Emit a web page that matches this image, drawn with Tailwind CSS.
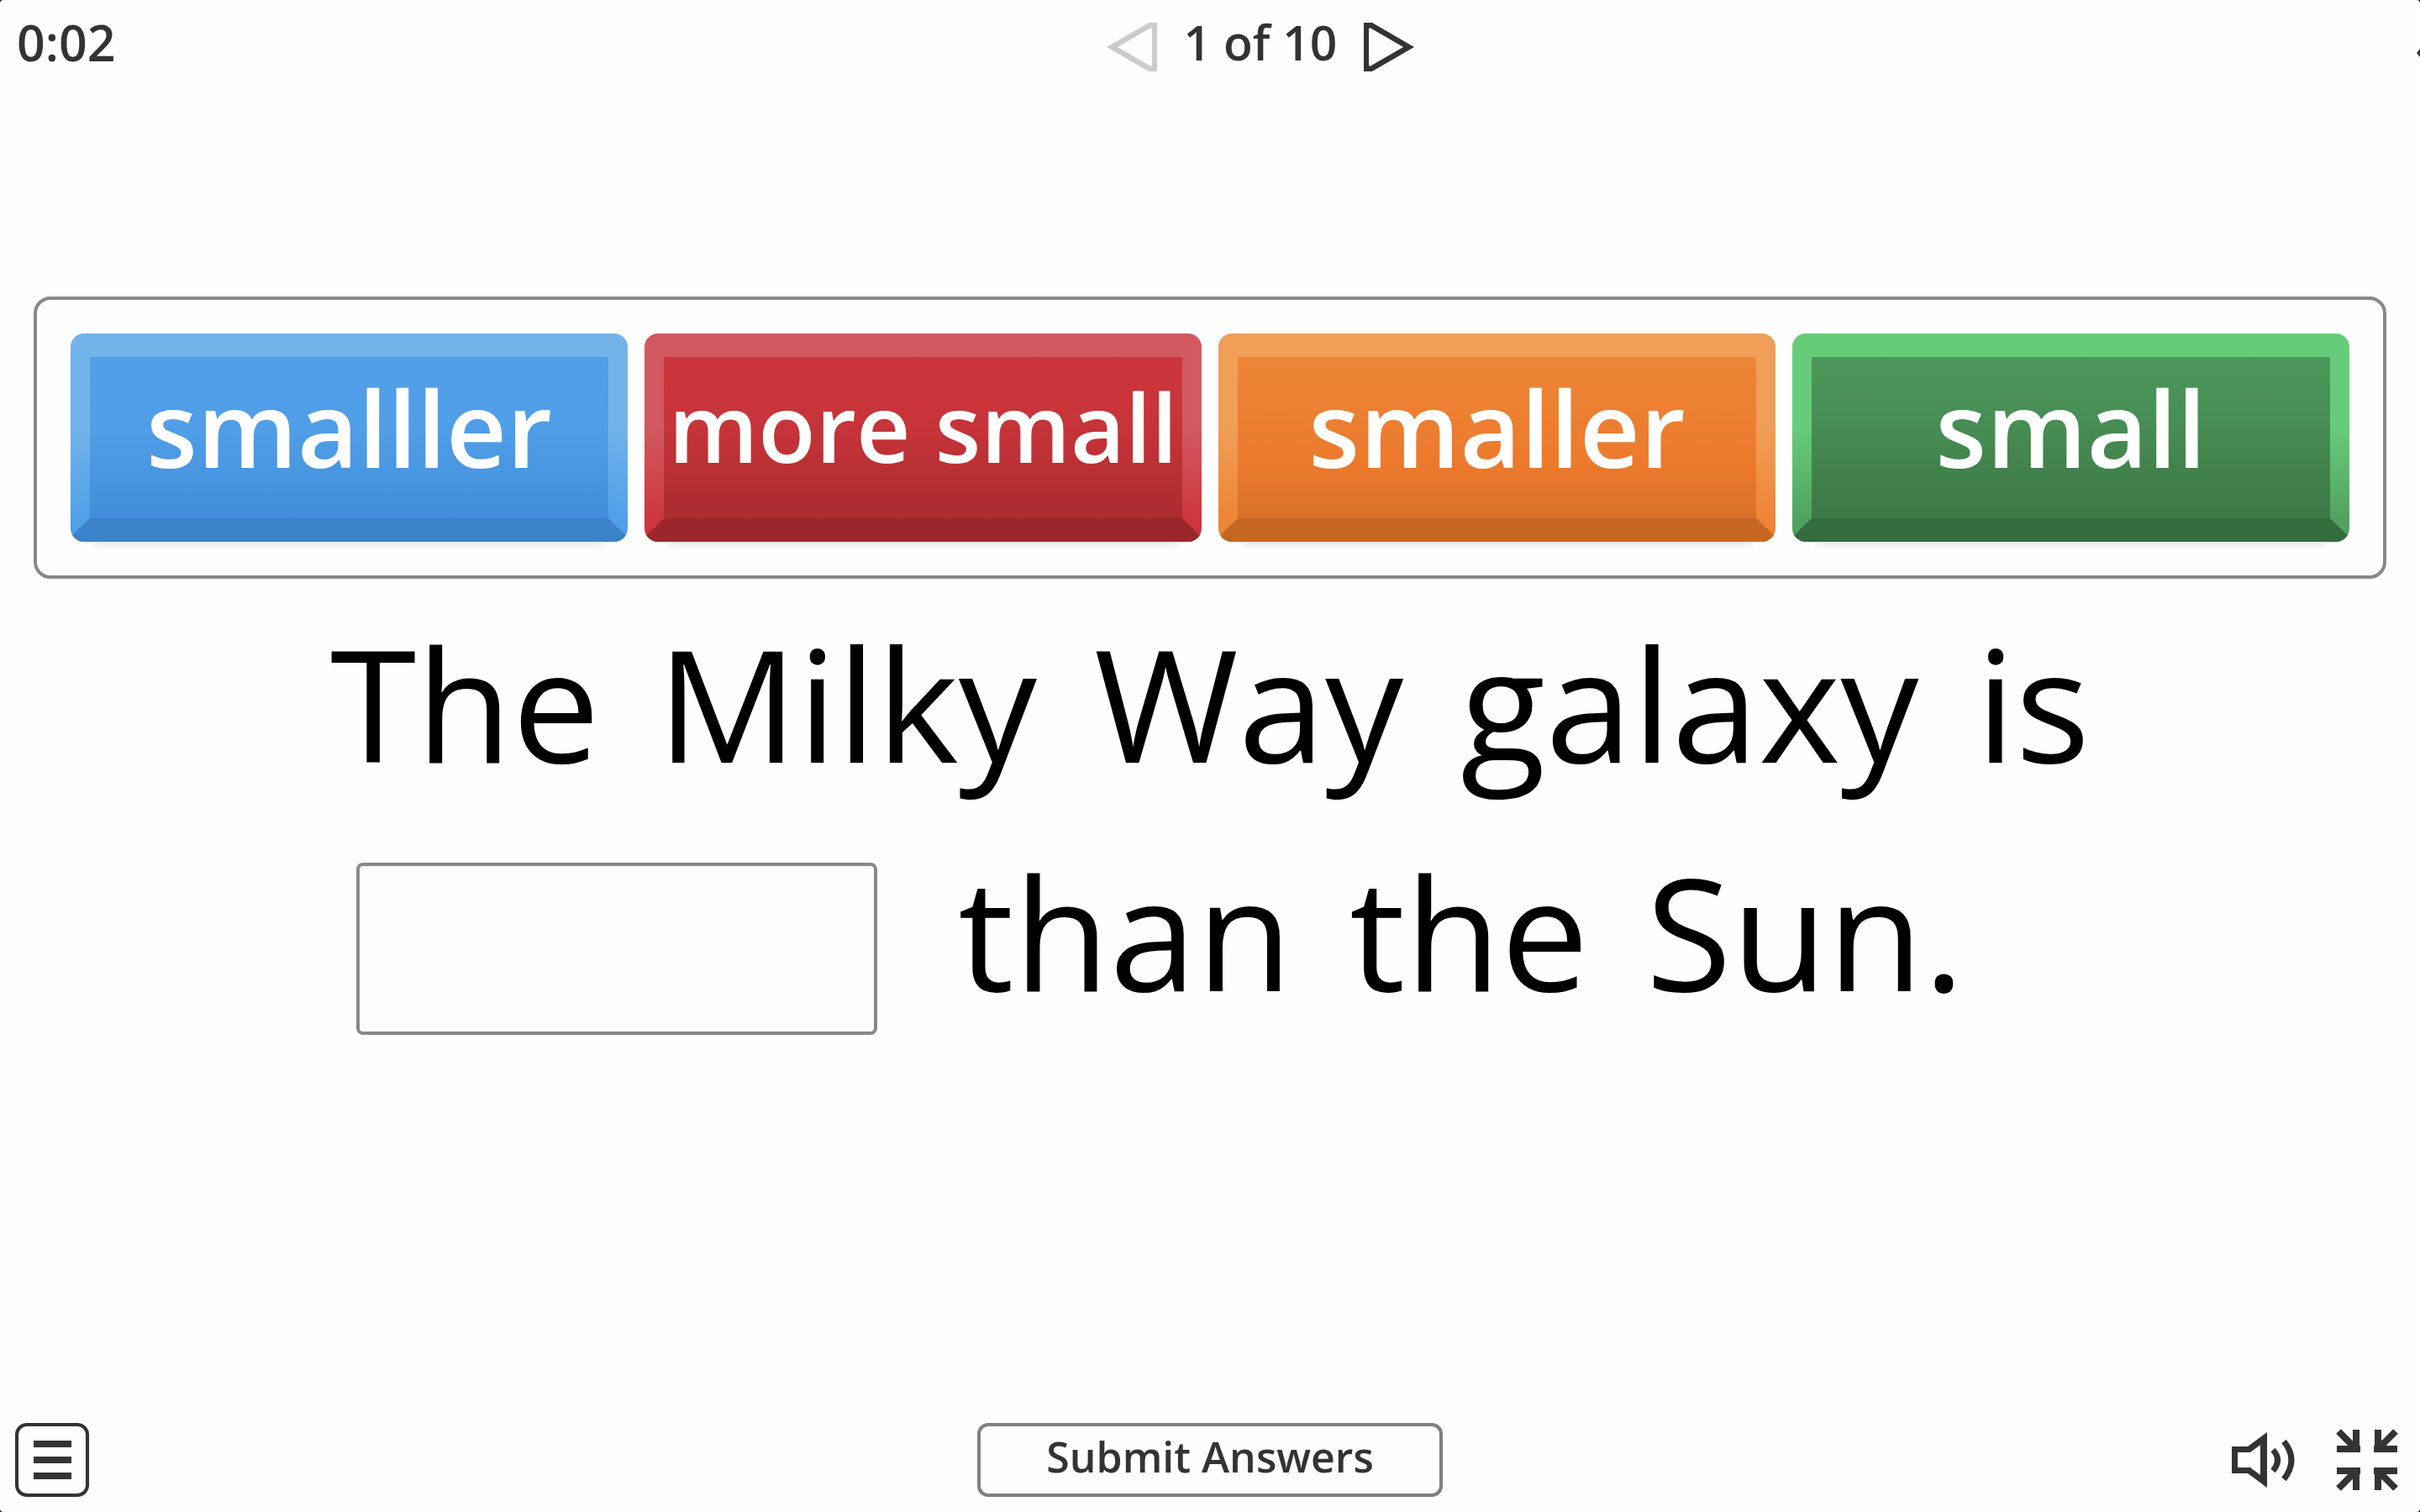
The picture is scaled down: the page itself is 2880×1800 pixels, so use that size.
<!DOCTYPE html>
<html lang="en">
<head>
<meta charset="utf-8">
<title>Complete the sentence</title>
<script src="https://cdn.jsdelivr.net/npm/@tailwindcss/browser@4"></script>
</head>
<body class="bg-black">
<div class="relative flex min-h-screen flex-col overflow-hidden rounded-[4px] bg-[#fefefe] font-['Open_Sans','Noto_Sans',sans-serif] text-[#333]">

  <header class="grid grid-cols-[1fr_auto_1fr] items-start px-5 pt-2">
    <time class="text-[59px] leading-[84px] font-semibold">0:02</time>
    <nav class="flex items-center pl-[120px]" aria-label="Questions">
      <button type="button" aria-label="Previous question" disabled class="mt-3 h-[58px] w-[60px]">
        <svg viewBox="0 0 60 58" class="size-full" fill="#ccc" fill-rule="evenodd"><path d="M0 29 50 0H60V58H50ZM13 29 51 51Q54 53 54 50V8Q54 5 51 7Z"/></svg>
      </button>
      <span class="px-8 text-[57px] leading-[84px] font-semibold">1 of 10</span>
      <button type="button" aria-label="Next question" class="mt-3 h-[58px] w-[60px]">
        <svg viewBox="0 0 60 58" class="size-full" fill="#333" fill-rule="evenodd"><path d="M60 29 10 0H0V58H10ZM47 29 9 51Q6 53 6 50V8Q6 5 9 7Z"/></svg>
      </button>
    </nav>
  </header>
  <svg viewBox="0 0 4 10" class="absolute top-[58px] right-0 h-[10px] w-1" fill="#333" aria-hidden="true"><path d="M4 0 0 5 4 10Z"/></svg>

  <main class="mt-[261px] flex-1 px-10">
    <!-- Each tile: light bevel on the button, dark lower edge in ::before, face in the span -->
    <section aria-label="Word choices" class="grid grid-cols-4 gap-5 rounded-[20px] border-4 border-[#888] p-10">
      <button type="button" class="relative flex h-[248px] overflow-hidden rounded-2xl bg-[linear-gradient(#72b3ea_45%,#509fe8_90%)] px-[23px] py-7 text-[125px] leading-none font-semibold whitespace-nowrap text-white shadow-[0_32px_8px_-28px_rgba(0,0,0,0.1)] before:absolute before:inset-x-0 before:bottom-0 before:h-7 before:bg-[#3c82c8] before:[clip-path:polygon(23px_0,calc(100%_-_23px)_0,100%_80%,100%_100%,0_100%,0_80%)]">
        <span class="flex flex-1 items-center justify-center bg-[linear-gradient(#529fe7,#509ee8_45%,#418dd9)] pb-[26px]">smalller</span>
      </button>
      <button type="button" class="relative flex h-[248px] overflow-hidden rounded-2xl bg-[linear-gradient(#d25960_45%,#cd363d_90%)] px-[23px] py-7 text-[112px] leading-none font-semibold whitespace-nowrap text-white shadow-[0_32px_8px_-28px_rgba(0,0,0,0.1)] before:absolute before:inset-x-0 before:bottom-0 before:h-7 before:bg-[#9b272b] before:[clip-path:polygon(23px_0,calc(100%_-_23px)_0,100%_80%,100%_100%,0_100%,0_80%)]">
        <span class="flex flex-1 items-center justify-center bg-[linear-gradient(#cb363b,#c73439_40%,#ab2c31)] pb-[26px]">more small</span>
      </button>
      <button type="button" class="relative flex h-[248px] overflow-hidden rounded-2xl bg-[linear-gradient(#f09e58_45%,#ee8435_90%)] px-[23px] py-7 text-[125px] leading-none font-semibold whitespace-nowrap text-white shadow-[0_32px_8px_-28px_rgba(0,0,0,0.1)] before:absolute before:inset-x-0 before:bottom-0 before:h-7 before:bg-[#c56623] before:[clip-path:polygon(23px_0,calc(100%_-_23px)_0,100%_80%,100%_100%,0_100%,0_80%)]">
        <span class="flex flex-1 items-center justify-center bg-[linear-gradient(#ed8537,#ec7a2d_65%,#da7029)] pb-[26px]">smaller</span>
      </button>
      <button type="button" class="relative flex h-[248px] overflow-hidden rounded-2xl bg-[linear-gradient(#67cc7a_45%,#4fa25f_90%)] px-[23px] py-7 text-[125px] leading-none font-semibold whitespace-nowrap text-white shadow-[0_32px_8px_-28px_rgba(0,0,0,0.1)] before:absolute before:inset-x-0 before:bottom-0 before:h-7 before:bg-[#356c3e] before:[clip-path:polygon(23px_0,calc(100%_-_23px)_0,100%_80%,100%_100%,0_100%,0_80%)]">
        <span class="flex flex-1 items-center justify-center bg-[linear-gradient(#4c975a,#478e54_40%,#3c7744)] pb-[26px]">small</span>
      </button>
    </section>

    <div class="mt-[11px] text-[186px] leading-[272px] text-black">
      <p class="flex justify-center gap-[68px]"><span>The</span><span>Milky</span><span>Way</span><span>galaxy</span><span>is</span></p>
      <p class="flex items-end justify-center gap-[68px] pr-[118px]">
        <input type="text" readonly aria-label="Missing word" class="mr-7 mb-3 h-[205px] w-[620px] rounded-lg border-4 border-[#888] bg-transparent">
        <span>than</span><span>the</span><span>Sun.</span>
      </p>
    </div>
  </main>

  <footer class="grid grid-cols-[1fr_auto_1fr] items-center px-[18px] pb-[18px]">
    <button type="button" aria-label="Menu" class="flex size-[88px] flex-col items-center justify-center gap-[11px] rounded-[14px] border-4 border-[#333]">
      <span class="h-2 w-[45px] bg-[#333]"></span>
      <span class="h-2 w-[45px] bg-[#333]"></span>
      <span class="h-2 w-[45px] bg-[#333]"></span>
    </button>
    <button type="button" class="flex h-[88px] w-[554px] items-center justify-center rounded-[13px] border-4 border-[#808080] pb-2 text-[50px] leading-none font-semibold">Submit Answers</button>
    <div class="flex items-center justify-end gap-12 pr-2">
      <button type="button" aria-label="Sound" class="h-[66px] w-[76px]">
        <svg viewBox="0 0 76 66" class="size-full"><path fill="#333" fill-rule="evenodd" d="M0 17H19L42 0V66L19 49H0ZM7 24V42H22L34 51V15L22 24Z"/><path fill="none" stroke="#333" stroke-width="7" d="M49 21Q60 33 49 46M62 11Q80 33 62 56"/></svg>
      </button>
      <button type="button" aria-label="Exit full screen" class="size-[74px]">
        <svg viewBox="0 0 74 74" class="size-full" fill="none" stroke="#333" stroke-width="8"><path d="M3 3 25 25M1 24H29M24 1V28M71 3 49 25M73 24H45M50 1V28M3 71 25 49M1 50H29M24 73V46M71 71 49 49M73 50H45M50 73V46"/></svg>
      </button>
    </div>
  </footer>
</div>
</body>
</html>
